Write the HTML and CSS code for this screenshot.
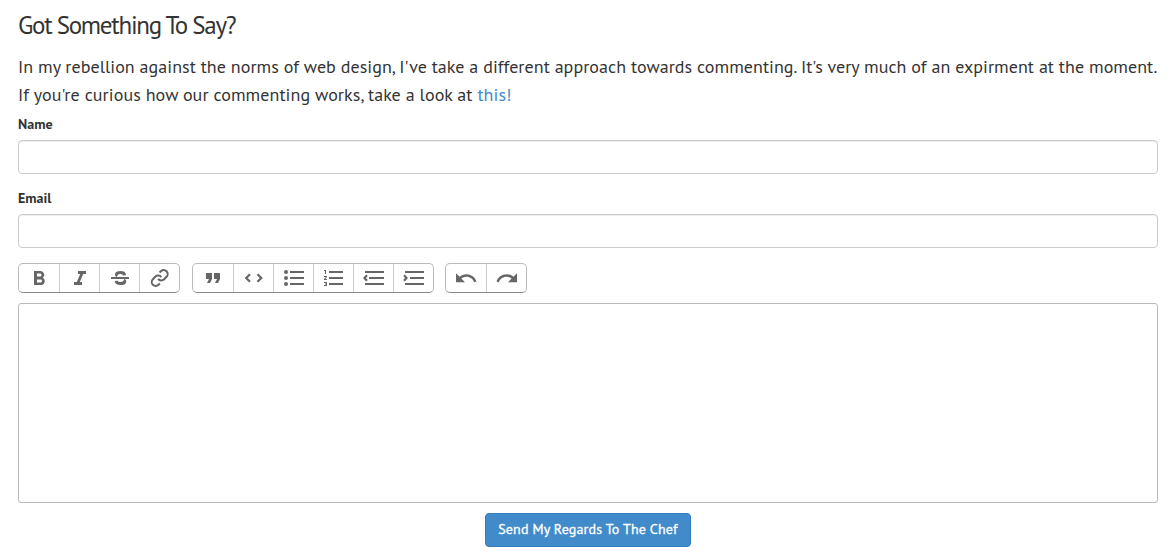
FILE: index.html
```html
<!DOCTYPE html>
<html lang="en">
<head>
<meta charset="utf-8">
<title>Comments</title>
<link rel="stylesheet" href="styles.css">
</head>
<body>
<main class="comment">
  <h3 class="title">Got Something To Say?</h3>
  <p class="intro"><span class="line line-one">In my rebellion against the norms of web design, I've take a different approach towards commenting. It's very much of an expirment at the moment.</span><span class="line line-two">If you're curious how our commenting works, take a look at <a href="#">this!</a></span></p>
  <form class="form">
    <label class="label" for="name">Name</label>
    <input class="field" id="name" type="text">
    <label class="label" for="email">Email</label>
    <input class="field" id="email" type="text">
    <div class="toolbar">
      <div class="group">
        <button type="button" class="tool" aria-label="Bold"><svg viewBox="0 0 40 28"><path transform="translate(8 3)" d="M15.6 10.79c.97-.67 1.65-1.77 1.65-2.79 0-2.26-1.75-4-4-4H7v14h7.04c2.09 0 3.71-1.7 3.71-3.79 0-1.52-.86-2.82-2.15-3.42zM10 6.5h3c.83 0 1.5.67 1.5 1.5s-.67 1.5-1.5 1.5h-3v-3zm3.5 9H10v-3h3.5c.83 0 1.5.67 1.5 1.5s-.67 1.5-1.5 1.5z"/></svg></button>
        <button type="button" class="tool" aria-label="Italic"><svg viewBox="0 0 40 28"><path transform="translate(9 3)" d="M10 4v3h2.21l-3.42 8H6v3h8v-3h-2.21l3.42-8H18V4z"/></svg></button>
        <button type="button" class="tool" aria-label="Strikethrough"><svg viewBox="0 0 40 28"><path d="M12 13h18v2H12z"/><path class="stroke thick" d="M25.5 11.4C25.4 9.5 24 8.5 21.6 8.5c-2.4 0-4.1.8-4.1 2.1 0 .5.2.9.8 1.3M17.2 16.9c.2 1.8 1.7 2.6 4.2 2.6s4.3-.8 4.3-2.1c0-.5-.3-.9-.9-1.3"/></svg></button>
        <button type="button" class="tool" aria-label="Link"><svg viewBox="0 0 40 28"><g class="stroke link" transform="translate(11.1 4.4) scale(.8)"><path d="M10 13a5 5 0 0 0 7.54.54l3-3a5 5 0 0 0-7.07-7.07l-1.72 1.71M14 11a5 5 0 0 0-7.54-.54l-3 3a5 5 0 0 0 7.07 7.07l1.71-1.71"/></g></svg></button>
      </div>
      <div class="group">
        <button type="button" class="tool" aria-label="Quote"><svg viewBox="0 0 40 28"><path transform="translate(8 2)" d="M6 17h3l2-4V7H5v6h3zm8 0h3l2-4V7h-6v6h3z"/></svg></button>
        <button type="button" class="tool" aria-label="Code"><svg viewBox="0 0 40 28"><path class="stroke medium" d="M17 10.2 13.2 14l3.8 3.8M24.5 10.2l3.8 3.8-3.8 3.8"/></svg></button>
        <button type="button" class="tool" aria-label="Bullets"><svg viewBox="0 0 40 28"><circle cx="13" cy="8" r="2"/><circle cx="13" cy="14" r="2"/><circle cx="13" cy="20" r="2"/><path d="M17 7h14v2H17zM17 13h14v2H17zM17 19h14v2H17z"/></svg></button>
        <button type="button" class="tool" aria-label="Numbers"><svg viewBox="0 0 40 28"><path transform="translate(9 2)" d="M2 17h2v.5H3v1h1v.5H2v1h3v-4H2v1zm1-9h1V4H2v1h1v3zm-1 3h1.8L2 13.1v.9h3v-1H3.2L5 10.9V10H2v1zm5-6v2h14V5H7zm0 14h14v-2H7v2zm0-6h14v-2H7v2z"/></svg></button>
        <button type="button" class="tool" aria-label="Outdent"><svg viewBox="0 0 40 28"><path d="M12 7h19v2H12zM16 13h15v2H16zM12 19h19v2H12z"/><path class="stroke medium" d="M14 11.2 11.5 14l2.5 2.8"/></svg></button>
        <button type="button" class="tool" aria-label="Indent"><svg viewBox="0 0 40 28"><path d="M12 7h19v2H12zM17 13h14v2H17zM12 19h19v2H12z"/><path class="stroke medium" d="M11 11.2 13.5 14 11 16.8"/></svg></button>
      </div>
      <div class="group">
        <button type="button" class="tool" aria-label="Undo"><svg viewBox="0 0 40 28"><path transform="translate(8 2.2)" d="M12.5 8c-2.65 0-5.05.99-6.9 2.6L2 7v9h9l-3.62-3.62c1.39-1.16 3.16-1.88 5.12-1.88 3.54 0 6.55 2.31 7.6 5.5l2.37-.78C21.08 11.03 17.15 8 12.5 8z"/></svg></button>
        <button type="button" class="tool" aria-label="Redo"><svg viewBox="0 0 40 28"><path transform="translate(9 2.2)" d="M18.4 10.6C16.55 8.99 14.15 8 11.5 8c-4.65 0-8.58 3.03-9.96 7.22L3.9 16c1.05-3.19 4.05-5.5 7.6-5.5 1.95 0 3.73.72 5.12 1.88L13 16h9V7l-3.6 3.6z"/></svg></button>
      </div>
    </div>
    <textarea class="editor" aria-label="Comment"></textarea>
    <button type="submit" class="submit">Send My Regards To The Chef</button>
  </form>
</main>
</body>
</html>
```
FILE: styles.css
```css
* { box-sizing: border-box; }
body {
  margin: 0;
  background: #fff;
  color: #333;
  font-family: "PT Sans", "Noto Sans", sans-serif;
  overflow: hidden;
}
.comment { padding: 10px 14px 0 18px; }
.title {
  margin: 0;
  font-size: 25px;
  font-weight: 400;
  line-height: 30px;
  letter-spacing: -1.28px;
  white-space: nowrap;
}
.intro { margin: 13px 0 0; font-size: 18px; line-height: 28px; }
.line { display: block; white-space: nowrap; }
.line-one { letter-spacing: 0.05px; }
.line-two { letter-spacing: 0.07px; }
.intro a { color: #428bca; text-decoration: none; }
.form { display: flex; flex-direction: column; }
.label {
  margin-top: 6px;
  height: 20px;
  margin-bottom: 5px;
  font-size: 14px;
  font-weight: 700;
  line-height: 18px;
  align-self: flex-start;
}
.field {
  height: 34px;
  margin: 0;
  padding: 6px 12px;
  border: 1px solid #ccc;
  border-radius: 4px;
  background: #fff;
  box-shadow: inset 0 1px 1px rgba(0, 0, 0, .075);
}
.field + .label { margin-top: 15px; }
.toolbar { display: flex; margin-top: 15px; }
.group {
  display: flex;
  height: 30px;
  border: 1px solid #bbb;
  border-bottom-color: #888;
  border-radius: 5px;
}
.group + .group { margin-left: 12px; }
.group + .group + .group { margin-left: 11px; }
.tool {
  width: 40px;
  height: 28px;
  margin: 0;
  padding: 0;
  border: 0;
  background: none;
}
.tool + .tool { border-left: 1px solid #ccc; }
.tool svg { display: block; width: 40px; height: 28px; fill: #666; }
.tool + .tool svg { margin-left: -1px; }
.tool .stroke { fill: none; stroke: #666; stroke-width: 1.8; }
.tool .link { stroke-width: 2.5; }
.tool .medium { stroke-width: 2.2; }
.tool .thick { stroke-width: 3.1; }
.editor {
  height: 200px;
  margin: 10px 0 0;
  border: 1px solid #bbb;
  border-radius: 3px;
  resize: none;
}
.submit {
  align-self: center;
  width: 206px;
  height: 34px;
  margin-top: 10px;
  padding: 0 0 2px;
  border: 1px solid #357ebd;
  border-radius: 4px;
  background: #428bca;
  color: #fff;
  font: 400 14px/30px "PT Sans", "Noto Sans", sans-serif;
  letter-spacing: 0.16px;
  -webkit-text-stroke: 0.3px #fff;
  white-space: nowrap;
}
```
